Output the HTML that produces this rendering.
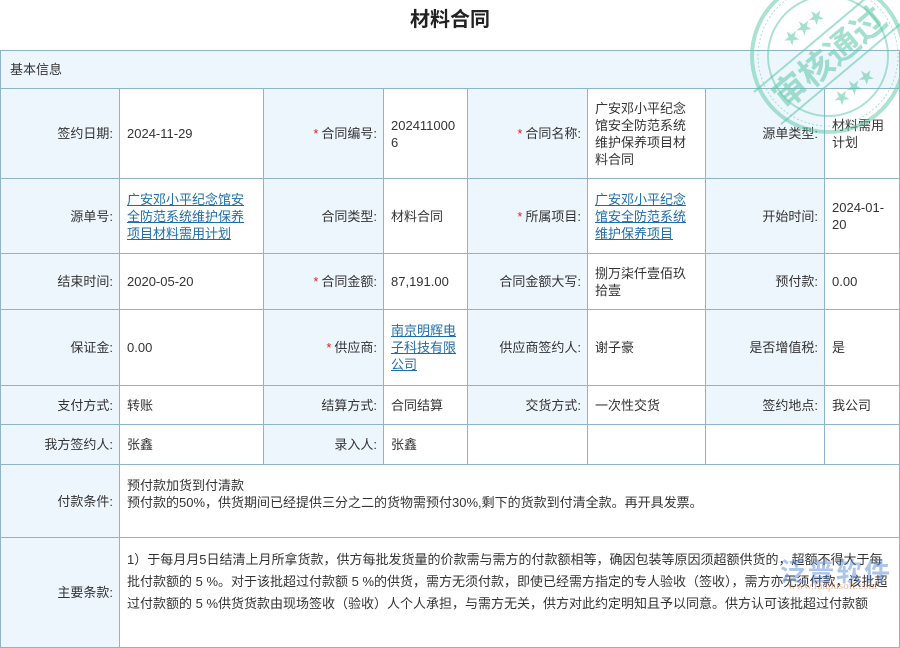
<!DOCTYPE html>
<html><head><meta charset="utf-8"><style>
body{margin:0;width:900px;height:600px;overflow:hidden;background:#fff;font-family:"Liberation Sans","Noto Sans CJK SC",sans-serif;font-size:13px;color:#333;position:relative}
h1{margin:0;position:absolute;top:6px;left:0;width:900px;text-align:center;font-size:20px;font-weight:bold;color:#222;line-height:28px}
table{position:absolute;top:50px;left:0;border-collapse:collapse;table-layout:fixed;width:899px}
td{border:1px solid #8fb4c9;padding:0 7px;vertical-align:middle;line-height:17px;word-break:break-all}
td.l{background:#eef6fd;text-align:right;padding-right:6px}
td.h{background:#eef6fd;text-align:left;padding-left:9px}
.s{color:#d22;margin-right:3px}
a{color:#1d6ea8;text-decoration:underline}
.stamp{position:absolute;left:732px;top:-12px}
</style></head><body>
<h1>材料合同</h1>
<table>
<colgroup><col style="width:119px"><col style="width:144px"><col style="width:120px"><col style="width:84px"><col style="width:120px"><col style="width:118px"><col style="width:119px"><col style="width:75px"></colgroup>
<tr style="height:38px"><td class="h" colspan="8">基本信息</td></tr>
<tr style="height:90px"><td class="l">签约日期:</td><td>2024-11-29</td><td class="l"><span class="s">*</span>合同编号:</td><td style="padding-right:11px">2024110006</td><td class="l"><span class="s">*</span>合同名称:</td><td>广安邓小平纪念馆安全防范系统维护保养项目材料合同</td><td class="l">源单类型:</td><td>材料需用计划</td></tr>
<tr style="height:75px"><td class="l">源单号:</td><td><a>广安邓小平纪念馆安全防范系统维护保养项目材料需用计划</a></td><td class="l">合同类型:</td><td>材料合同</td><td class="l"><span class="s">*</span>所属项目:</td><td><a>广安邓小平纪念馆安全防范系统维护保养项目</a></td><td class="l">开始时间:</td><td style="word-break:normal">2024-01-20</td></tr>
<tr style="height:56px"><td class="l">结束时间:</td><td>2020-05-20</td><td class="l"><span class="s">*</span>合同金额:</td><td>87,191.00</td><td class="l">合同金额大写:</td><td>捌万柒仟壹佰玖拾壹</td><td class="l">预付款:</td><td>0.00</td></tr>
<tr style="height:76px"><td class="l">保证金:</td><td>0.00</td><td class="l"><span class="s">*</span>供应商:</td><td><a>南京明辉电子科技有限公司</a></td><td class="l">供应商签约人:</td><td>谢子豪</td><td class="l">是否增值税:</td><td>是</td></tr>
<tr style="height:39px"><td class="l">支付方式:</td><td>转账</td><td class="l">结算方式:</td><td>合同结算</td><td class="l">交货方式:</td><td>一次性交货</td><td class="l">签约地点:</td><td>我公司</td></tr>
<tr style="height:40px"><td class="l">我方签约人:</td><td>张鑫</td><td class="l">录入人:</td><td>张鑫</td><td></td><td></td><td></td><td></td></tr>
<tr style="height:73px"><td class="l">付款条件:</td><td colspan="7" style="vertical-align:top;padding-top:12px">预付款加货到付清款<br>预付款的50%，供货期间已经提供三分之二的货物需预付30%,剩下的货款到付清全款。再开具发票。</td></tr>
<tr style="height:110px"><td class="l">主要条款:</td><td colspan="7" style="line-height:22px;vertical-align:top;padding-top:11px">1）于每月月5日结清上月所拿货款，供方每批发货量的价款需与需方的付款额相等，确因包装等原因须超额供货的，超额不得大于每批付款额的 5 %。对于该批超过付款额 5 %的供货，需方无须付款，即使已经需方指定的专人验收（签收），需方亦无须付款，该批超过付款额的 5 %供货货款由现场签收（验收）人个人承担，与需方无关，供方对此约定明知且予以同意。供方认可该批超过付款额</td></tr>
</table>
<svg class="stamp" width="180" height="180" viewBox="0 0 180 180">
<g opacity="0.5" fill="none" stroke="#5cc7a6">
<circle cx="96" cy="68" r="76" stroke-width="4"/>
<circle cx="96" cy="68" r="70" stroke-width="1" stroke-dasharray="2 2"/>
<circle cx="96" cy="68" r="60" stroke-width="2"/>
</g>
<g transform="rotate(-40 96 68)" opacity="0.55">
<line x1="16" y1="48" x2="176" y2="48" stroke="#5cc7a6" stroke-width="2"/>
<line x1="16" y1="90" x2="176" y2="90" stroke="#5cc7a6" stroke-width="2"/>
<text x="96" y="82" text-anchor="middle" font-size="34" font-weight="bold" fill="#5cc7a6" font-family="Noto Sans CJK SC,sans-serif">审核通过</text>
<text x="96" y="36" text-anchor="middle" font-size="16" fill="#5cc7a6">★★★</text>
<text x="96" y="114" text-anchor="middle" font-size="16" fill="#5cc7a6">★★★</text>
</g>
</svg>
<div style="position:absolute;left:780px;top:552px;opacity:.45;font-size:26px;font-weight:bold;color:#4b7fd0;letter-spacing:2px">泛普软件</div>
<div style="position:absolute;left:788px;top:580px;opacity:.45;font-size:11px;color:#d06a3a;font-family:'Liberation Serif',serif">www.fanpusoft.com</div>
</body></html>
